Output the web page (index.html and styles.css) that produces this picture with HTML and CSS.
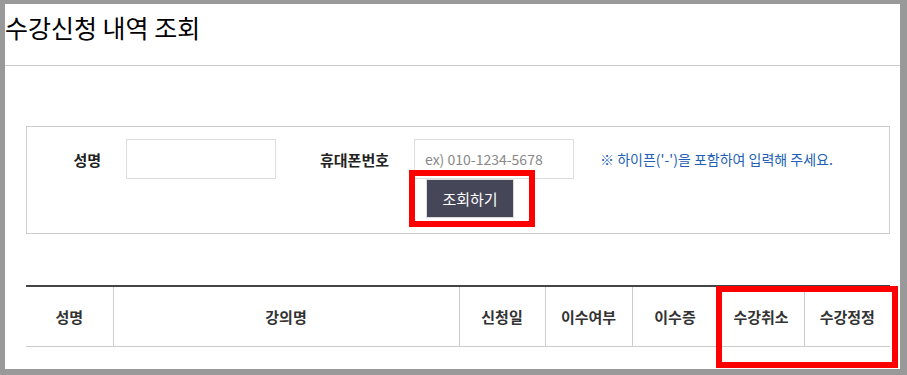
FILE: index.html
```html
<!DOCTYPE html>
<html>
<head>
	<meta charset="utf-8">
	<title>수강신청 내역 조회</title>
	<link rel="stylesheet" href="styles.css">
</head>
<body>
	<div class="frame">
		<h1 class="title">수강신청 내역 조회</h1>

		<div class="content">
			<div class="search">
				<div class="search__row">
					<label class="search__label search__label--name" for="name">성명</label>
					<input type="text" id="name" class="search__input search__input--name">
					<label class="search__label search__label--phone" for="phone">휴대폰번호</label>
					<input type="text" id="phone" class="search__input search__input--phone" placeholder="ex) 010-1234-5678">
					<span class="search__hint">※ 하이픈('-')을 포함하여 입력해 주세요.</span>
				</div>
				<div class="search__actions">
					<button class="search__button">조회하기</button>
				</div>
			</div>

			<table class="list">
				<colgroup>
					<col style="width: 87px">
					<col style="width: 346px">
					<col style="width: 86px">
					<col style="width: 87px">
					<col style="width: 86px">
					<col style="width: 86px">
					<col style="width: 86px">
				</colgroup>
				<thead>
					<tr>
						<th>성명</th>
						<th>강의명</th>
						<th>신청일</th>
						<th>이수여부</th>
						<th>이수증</th>
						<th>수강취소</th>
						<th>수강정정</th>
					</tr>
				</thead>
			</table>
		</div>

		<div class="mark mark--button"></div>
		<div class="mark mark--columns"></div>
	</div>
</body>
</html>
```

FILE: styles.css
```css
body {
	font-family: "Noto Sans CJK KR", "Noto Sans", sans-serif;
	color: #222;
	background-color: #fff;
	margin: 0;
}

.frame {
	position: relative;
	box-sizing: border-box;
	width: 907px;
	height: 375px;
	border-style: solid;
	border-color: #999;
	border-width: 4px 7px 6px 5px;
	overflow: hidden;
}

.title {
	margin: 0;
	padding-top: 8px;
	height: 53px;
	font-size: 25px;
	font-weight: normal;
	line-height: 30px;
	color: #000;
	border-bottom: 1px solid #ccc;
}

.content {
	padding: 60px 10px 0 21px;
}

.search {
	box-sizing: border-box;
	width: 864px;
	height: 108px;
	padding-top: 12px;
	border: 1px solid #ccc;
}

.search__row {
	display: flex;
	align-items: center;
	height: 40px;
}

.search__label {
	box-sizing: border-box;
	font-size: 15px;
	font-weight: bold;
	text-align: right;
	padding-right: 25px;
}

.search__label--name {
	width: 99px;
}

.search__label--phone {
	width: 138px;
}

.search__input {
	box-sizing: border-box;
	height: 40px;
	border: 1px solid #ddd;
	padding: 0 10px;
	font-family: inherit;
	font-size: 14px;
	color: #333;
}

.search__input--name {
	width: 150px;
}

.search__input--phone {
	width: 160px;
}

::placeholder {
	color: #888;
}

.search__hint {
	margin-left: 26px;
	font-size: 14px;
	color: #235fb5;
}

.search__actions {
	padding-left: 399px;
}

.search__button {
	width: 88px;
	height: 39px;
	background-color: #464659;
	border: 1px solid #ddd;
	color: #fff;
	font-family: inherit;
	font-size: 15px;
	cursor: pointer;
}

.list {
	width: 864px;
	margin-top: 51px;
	table-layout: fixed;
	border-collapse: collapse;
	border-top: 2px solid #444;
}

.list th {
	height: 59px;
	padding: 0;
	font-size: 15px;
	font-weight: bold;
	color: #333;
	border-bottom: 1px solid #ccc;
	border-left: 1px solid #ccc;
}

.list th:first-child {
	border-left: none;
}

.mark {
	position: absolute;
	box-sizing: border-box;
	border: 6px solid #f00;
}

.mark--button {
	left: 404px;
	top: 166px;
	width: 126px;
	height: 57px;
}

.mark--columns {
	left: 711px;
	top: 282px;
	width: 182px;
	height: 82px;
}
```
